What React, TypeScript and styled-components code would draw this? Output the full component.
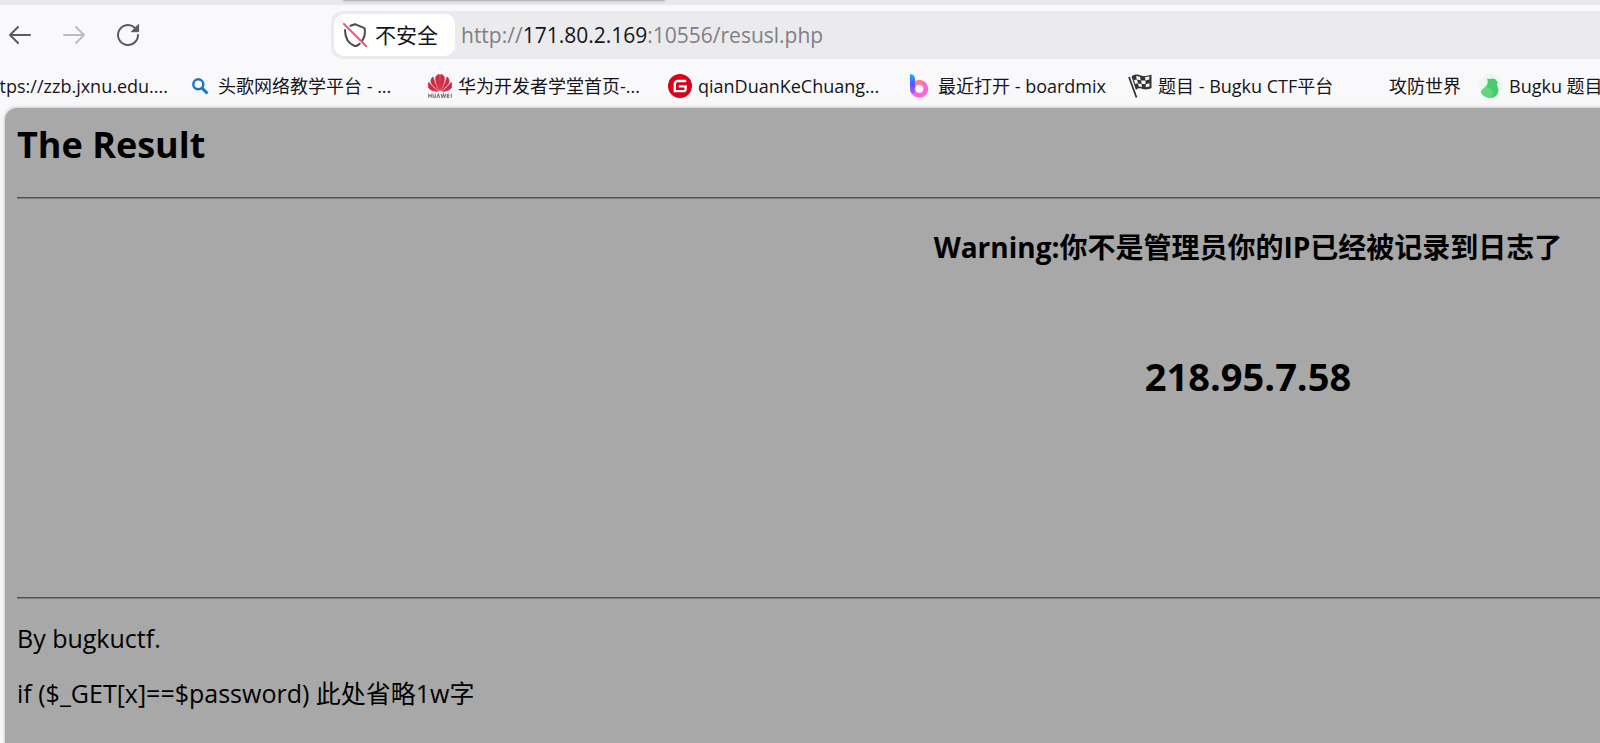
import React from "react";
import styled, { createGlobalStyle } from "styled-components";

const GlobalStyle = createGlobalStyle`
  *, *::before, *::after { box-sizing: border-box; }
  html, body, #root { height: 100%; }
  body {
    margin: 0;
    overflow: hidden;
    background: #f9f9fb;
    color: #15141a;
    font-family: "Open Sans", "Noto Sans CJK SC", sans-serif;
  }
`;

const Window = styled.div`
  display: flex;
  flex-direction: column;
  min-height: 100%;
  overflow: hidden;
`;

const TabStrip = styled.div`
  flex: none;
  height: 5px;
  padding-left: 343px;
  background: #e9e9eb;
  overflow: hidden;
`;

const ActiveTab = styled.div`
  width: 322px;
  height: 1px;
  border-radius: 0 0 4px 4px;
  background: #b4b4b8;
  box-shadow: 0 0 3px #a0a0a4;
`;

const Toolbar = styled.div`
  flex: none;
  display: flex;
  align-items: center;
  height: 60px;
  padding-left: 6px;
`;

const NavButtons = styled.div`
  flex: none;
  display: flex;
  gap: 26px;
  width: 325px;
`;

const NavButton = styled.button`
  display: flex;
  align-items: center;
  justify-content: center;
  width: 28px;
  height: 28px;
  padding: 0;
  border: 0;
  background: none;
  color: #5b5b66;

  &:disabled { color: #bcbcc2; }
`;

const AddressBar = styled.div`
  flex: 1;
  display: flex;
  align-items: center;
  gap: 6px;
  height: 48px;
  padding: 3px;
  border-radius: 12px 0 0 12px;
  background: #ebebed;
`;

const SecurityButton = styled.button`
  flex: none;
  display: flex;
  align-items: center;
  gap: 8px;
  width: 121px;
  height: 42px;
  padding: 0 0 0 9px;
  border: 0;
  border-radius: 10px;
  background: #fff;
  color: #15141a;
  font: inherit;
  font-size: 21px;
  line-height: 30px;
  white-space: nowrap;
`;

const Address = styled.div`
  flex: 1;
  color: #808084;
  font-size: 21px;
  line-height: 30px;
  white-space: nowrap;
  outline: none;
`;

const Host = styled.span`
  color: #15141a;
`;

const Bookmarks = styled.nav`
  flex: none;
  display: flex;
  align-items: center;
  gap: 18px;
  height: 43px;
  padding-bottom: 2px;
  overflow: hidden;
`;

const Bookmark = styled.a<{ $first?: boolean }>`
  flex: none;
  display: flex;
  align-items: center;
  justify-content: ${(p) => (p.$first ? "flex-end" : "flex-start")};
  gap: 6px;
  width: ${(p) => (p.$first ? "170px" : "auto")};
  padding-right: ${(p) => (p.$first ? "2px" : "0")};
  color: inherit;
  font-size: 18px;
  line-height: 26px;
  text-decoration: none;
  white-space: nowrap;
`;

const BookmarkIcon = styled.span`
  flex: none;
  display: flex;
  align-items: center;
  justify-content: center;
  width: 24px;
  height: 24px;
`;

const BookmarkLabel = styled.span<{ $width?: number }>`
  width: ${(p) => (p.$width ? `${p.$width}px` : "auto")};
`;

const Page = styled.main`
  flex: 1;
  width: calc(156vw - 10px);
  margin-left: 5px;
  padding: 11px 12px 0;
  border-radius: 12px 0 0 0;
  background: #a8a8a8;
  box-shadow: 0 0 2px 1px #d4d4d8, 0 0 6px #e4e4e8;
  color: #000;
  font-size: 25px;
  line-height: 32px;
`;

const Title = styled.h1`
  margin: 0;
  font-size: 36px;
  line-height: 52px;
`;

const ClientAddress = styled.h2`
  margin: 0;
  font-size: 38px;
  line-height: 52px;
`;

const Rule = styled.hr`
  height: 2px;
  margin: 0;
  border: 0;
  border-top: 1px solid #505050;
  background: #808080;
`;

const Result = styled.section`
  display: flex;
  flex-direction: column;
  align-items: center;
  gap: 84px;
  height: 398px;
  padding-top: 29px;
`;

const Warning = styled.h3`
  margin: 0;
  font-size: 28px;
  line-height: 38px;
`;

const Header = styled.header`
  height: 78px;
`;

const Footer = styled.footer`
  display: flex;
  flex-direction: column;
  gap: 23px;
  padding-top: 23px;
`;

const Line = styled.p`
  margin: 0;
`;

const SearchIcon = () => (
  <svg width="18" height="18" viewBox="0 0 18 18" fill="none" stroke="#1a73c8" strokeWidth="2.4">
    <circle cx="7.3" cy="7.3" r="5" />
    <path d="M11 11l5.5 5.5" strokeWidth="3" />
  </svg>
);

const HuaweiIcon = () => (
  <svg width="24" height="24" viewBox="0 0 24 24">
    <g fill="#cf2b45" stroke="#cf2b45" strokeWidth="0.7">
      <path d="M11.6 16.5C8.6 11 7.4 7 7.7 3.4C8.3 1.5 9.5.6 11.3.4C12 5.5 12.1 11 11.6 16.5z" />
      <path d="M12.4 16.5C15.4 11 16.6 7 16.3 3.4C15.7 1.5 14.5.6 12.7.4C12 5.5 11.9 11 12.4 16.5z" />
      <path d="M10.7 16.6C7.5 14.5 3.3 10.5 2.9 7.5C2.7 5.5 3.6 3.8 5 2.9C6.5 8 8.5 12.8 10.7 16.6z" />
      <path d="M13.3 16.6C16.5 14.5 20.7 10.5 21.1 7.5C21.3 5.5 20.4 3.8 19 2.9C17.5 8 15.5 12.8 13.3 16.6z" />
      <path d="M10 17.3C6 17.4 2.2 16.3.8 14C-.2 12 0 9.5.9 8.3C3.5 12 6.5 15 10 17.3z" />
      <path d="M14 17.3C18 17.4 21.8 16.3 23.2 14C24.2 12 24 9.5 23.1 8.3C20.5 12 17.5 15 14 17.3z" />
    </g>
    <path
      d="M.7 19.8v4M3.2 19.8v4M.7 21.8h2.5M5 19.8v3.5h2.3v-3.5M8.8 24l1.5-4 1.5 4M13 19.8l1.2 4 1.2-4 1.2 4 1.2-4M21.3 20.2h-2v3.4h2M19.3 21.9h2M23.3 19.8v4"
      fill="none"
      stroke="#77777b"
      strokeWidth="1.1"
    />
  </svg>
);

const GiteeIcon = () => (
  <svg width="24" height="24" viewBox="0 0 24 24">
    <circle cx="12" cy="12" r="12" fill="#d9001b" />
    <path
      d="M18.2 7H9.8A3 3 0 0 0 6.8 10v7.2h8.4a2.5 2.5 0 0 0 2.5-2.5v-2.4H10.8"
      fill="none"
      stroke="#fff"
      strokeWidth="2.3"
    />
  </svg>
);

const BoardmixIcon = () => (
  <svg width="24" height="24" viewBox="0 0 24 24">
    <defs>
      <linearGradient id="stem" x1="0" y1="0" x2="0" y2="1">
        <stop offset="0" stopColor="#12b5f5" />
        <stop offset=".5" stopColor="#5a55ff" />
        <stop offset="1" stopColor="#b45cff" />
      </linearGradient>
      <linearGradient id="bowl" x1="0" y1="0" x2=".6" y2="1">
        <stop offset="0" stopColor="#ff9068" />
        <stop offset=".45" stopColor="#ff6cc0" />
        <stop offset="1" stopColor="#ff66e0" />
      </linearGradient>
    </defs>
    <circle cx="11.3" cy="14.8" r="6.5" fill="none" stroke="url(#bowl)" strokeWidth="5" />
    <path d="M2 0C5 .2 7 1.8 7 5v8C6 14 6.2 16.5 7.5 18L4 20C2.6 18.5 2 16.5 2 14z" fill="url(#stem)" />
  </svg>
);

const FlagIcon = () => (
  <svg width="24" height="24" viewBox="0 0 24 24">
    <path d="M1 3l7.5 20.5" stroke="#333" strokeWidth="1.8" />
    <path d="M3.5 2.5C7-.5 10 .5 13 1.5s6 .5 10.5-1V14c-4 2-7 1.5-9.500.8S10 14 8 16z" fill="#333" />
    <g fill="#f4f4f4">
      <path d="M8 2l4 .8.7 3.4-3.9-.6z" />
      <path d="M17 3.2l4.3-1v3.3l-3.8.9z" />
      <path d="M13 6.5l4.5.1v3.5l-3.8-.1z" />
      <path d="M6 6l3-.5 1 3.7-2.9.7z" />
      <path d="M9.9 9.5l3.6.4.5 3-3.3-.4z" />
      <path d="M17.7 10.2l3.8-1v3.3l-3.7.7z" />
    </g>
  </svg>
);

const BirdIcon = () => (
  <svg width="24" height="24" viewBox="0 0 24 24">
    <circle cx="12" cy="12" r="12" fill="#e8f9ef" />
    <path
      d="M8 4.5C10 5.5 11.5 4.6 13.5 4.6C16 4.6 17.3 6 17.6 7L19.200 8.2L17.8 9.5C17.8 11.5 19.4 13 19.4 16C19.4 20.5 16 24 11.5 24C7 24 3.5 21.5 1.8 18C3.5 14.5 8.5 12.500 8.700 8.500C8.700 7 8.500 5.500 8 4.500z"
      fill="#47cc72"
    />
    <path d="M1.8 18C3 15.500 5 14 7 12.500C11 13.200 14 16.500 13.500 20C13.200 22 12.500 23.200 11.500 24C7 24 3.500 21.500 1.800 18z" fill="#66d67a" />
  </svg>
);

const BackIcon = () => (
  <svg width="24" height="24" viewBox="0 0 24 24" fill="none" stroke="currentColor" strokeWidth="2" strokeLinecap="round" strokeLinejoin="round">
    <path d="M22 12H2M10 4l-8 8 8 8" />
  </svg>
);

const ForwardIcon = () => (
  <svg width="24" height="24" viewBox="0 0 24 24" fill="none" stroke="currentColor" strokeWidth="2" strokeLinecap="round" strokeLinejoin="round">
    <path d="M2 12h20M14 4l8 8-8 8" />
  </svg>
);

const ReloadIcon = () => (
  <svg width="24" height="24" viewBox="0 0 24 24">
    <path d="M22 12a10 10 0 1 1-3.5-7.6" fill="none" stroke="currentColor" strokeWidth="2" strokeLinecap="round" />
    <path d="M22.6 1.4v7.3h-7.3z" fill="currentColor" stroke="currentColor" strokeLinejoin="round" />
  </svg>
);

const InsecureIcon = () => (
  <svg width="24" height="24" viewBox="0 0 24 24" fill="none" strokeLinecap="round" strokeLinejoin="round">
    <path
      d="M7.5 2.8L12 1.2l9.5 4c1 5 .4 9-2.2 12.500M16.700 20.700C15.400 22 13.800 23 12 23.200C5 20.500 2 14 2 7"
      stroke="#4a4a50"
      strokeWidth="2"
    />
    <path d="M1 1l22.5 22.5" stroke="#ff4f6e" strokeWidth="2" />
  </svg>
);

type Entry = { label: string; width?: number; icon?: React.ReactNode };

const entries: Entry[] = [
  { label: "头歌网络教学平台 - ...", width: 192, icon: <SearchIcon /> },
  { label: "华为开发者学堂首页-...", width: 192, icon: <HuaweiIcon /> },
  { label: "qianDuanKeChuang...", width: 192, icon: <GiteeIcon /> },
  { label: "最近打开 - boardmix", width: 172, icon: <BoardmixIcon /> },
  { label: "题目 - Bugku CTF平台", width: 183, icon: <FlagIcon /> },
  { label: "攻防世界", width: 72 },
  { label: "Bugku 题目", icon: <BirdIcon /> },
];

export default function App() {
  return (
    <Window>
      <GlobalStyle />
      <TabStrip>
        <ActiveTab />
      </TabStrip>
      <Toolbar>
        <NavButtons>
          <NavButton aria-label="后退"><BackIcon /></NavButton>
          <NavButton aria-label="前进" disabled><ForwardIcon /></NavButton>
          <NavButton aria-label="刷新"><ReloadIcon /></NavButton>
        </NavButtons>
        <AddressBar>
          <SecurityButton>
            <InsecureIcon />
            不安全
          </SecurityButton>
          <Address role="textbox" aria-label="地址" contentEditable suppressContentEditableWarning spellCheck={false}>
            http://<Host>171.80.2.169</Host>:10556/resusl.php
          </Address>
        </AddressBar>
      </Toolbar>
      <Bookmarks>
        <Bookmark href="#" $first>https://zzb.jxnu.edu....</Bookmark>
        {entries.map((entry) => (
          <Bookmark href="#" key={entry.label}>
            <BookmarkIcon>{entry.icon}</BookmarkIcon>
            <BookmarkLabel $width={entry.width}>{entry.label}</BookmarkLabel>
          </Bookmark>
        ))}
      </Bookmarks>
      <Page>
        <Header>
          <Title>The Result</Title>
        </Header>
        <Rule />
        <Result>
          <Warning>Warning:你不是管理员你的IP已经被记录到日志了</Warning>
          <ClientAddress>218.95.7.58</ClientAddress>
        </Result>
        <Rule />
        <Footer>
          <Line>By bugkuctf.</Line>
          <Line>if ($_GET[x]==$password) 此处省略1w字</Line>
        </Footer>
      </Page>
    </Window>
  );
}
